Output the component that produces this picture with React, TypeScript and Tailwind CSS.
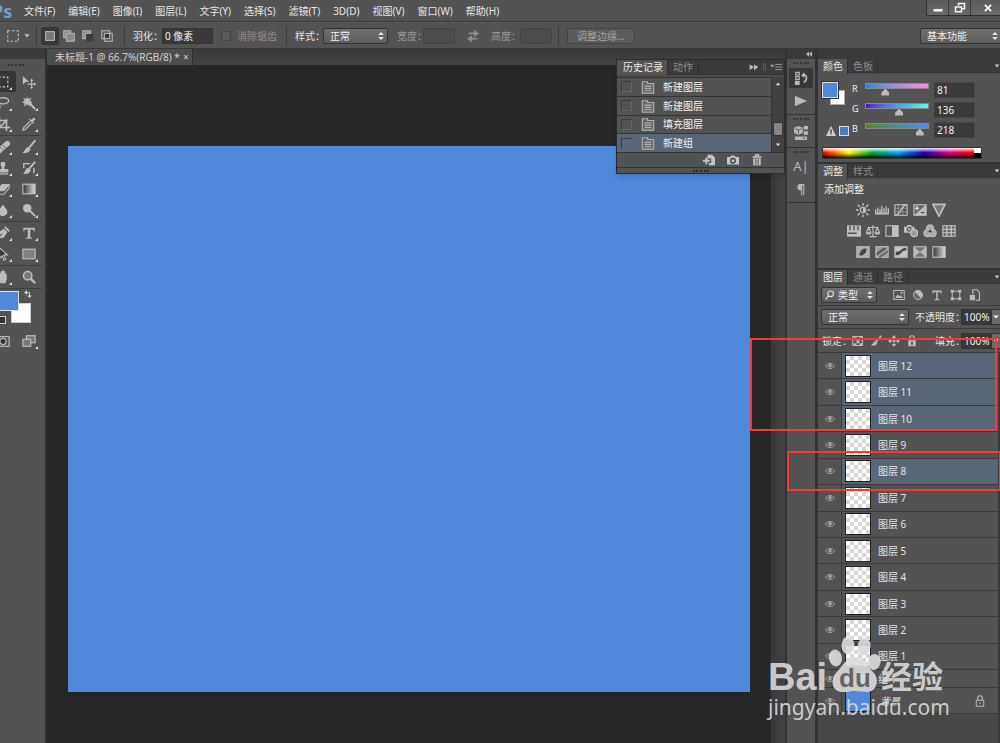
import React from "react";

type IconProps = { children: React.ReactNode; className?: string; box?: string };

function Icon({ children, className = "w-4 h-4", box = "0 0 16 16" }: IconProps) {
  return (
    <svg viewBox={box} className={`shrink-0 ${className}`} fill="none" stroke="currentColor" strokeWidth="1.3" aria-hidden="true">
      {children}
    </svg>
  );
}

const F = { fill: "currentColor", stroke: "none" };

const menus = ["文件(F)", "编辑(E)", "图像(I)", "图层(L)", "文字(Y)", "选择(S)", "滤镜(T)", "3D(D)", "视图(V)", "窗口(W)", "帮助(H)"];

function UpDown() {
  return (
    <svg viewBox="0 0 6 8" className="pointer-events-none absolute right-1 top-1/2 h-2 w-1.5 -translate-y-1/2" fill="#e0e0e0" aria-hidden="true">
      <path d="M0 3L3 0l3 3zM0 5h6L3 8z" />
    </svg>
  );
}

function Select({ label, value, options, className, pad = "pl-1.5" }: { label: string; value: string; options: string[]; className: string; pad?: string }) {
  return (
    <div className={`relative h-4 shrink-0 ${className}`}>
      <select
        aria-label={label}
        defaultValue={value}
        className={`block h-4 w-full appearance-none rounded-xs border border-[#333] bg-linear-to-b from-[#6f6f6f] to-[#5c5c5c] text-[10px] leading-[14px] text-[#f0f0f0] ${pad}`}
      >
        {options.map((o) => (
          <option key={o}>{o}</option>
        ))}
      </select>
      <UpDown />
    </div>
  );
}

function Field({ id, label, value, className, dim = false }: { id: string; label: string; value: string; className: string; dim?: boolean }) {
  return (
    <>
      <label htmlFor={id} className={`whitespace-nowrap ${dim ? "text-[#999]" : "text-[#e4e4e4]"}`}>{label}</label>
      <input
        id={id}
        defaultValue={value}
        disabled={dim}
        className={`h-4 border pl-0.5 text-[10px] ${dim ? "border-[#454545] bg-[#4c4c4c]" : "border-[#333] bg-[#393939] text-[#f0f0f0]"} ${className}`}
      />
    </>
  );
}

function Sep() {
  return <span className="h-5 w-px shrink-0 bg-[#3d3d3d]" />;
}

function TopBars() {
  const modes = [
    <rect key="a" x="3" y="3" width="10" height="10" fill="#777" />,
    <g key="b" fill="#8a8a8a"><rect x="2" y="2" width="8" height="8" /><rect x="5" y="5" width="9" height="9" /></g>,
    <g key="c"><path d="M2 11V2h9v3H5v6z" fill="#888" /><rect x="6" y="6" width="8" height="8" fill="#3c3c3c" stroke="none" /></g>,
    <g key="d"><rect x="2" y="2" width="9" height="9" /><rect x="5" y="5" width="9" height="9" /><rect x="6" y="6" width="4" height="4" fill="#333" stroke="none" /></g>,
  ];
  return (
    <header className="bg-[#535353]">
      <div className="flex h-[22px] items-center border-b border-[#3b3b3b]">
        <span className="-ml-2 w-[30px] text-lg font-bold leading-5 text-[#6f9fd0]">Ps</span>
        <nav className="flex gap-[13px] pl-0.5 text-[#e6e6e6]">
          {menus.map((m) => (
            <button key={m} className="whitespace-nowrap">{m}</button>
          ))}
        </nav>
        <div className="ml-auto flex h-4 self-start rounded-bl-xs border-b border-l border-[#2f2f2f] bg-linear-to-b from-[#5a5a5a] to-[#6a6a6a] text-[#f2f2f2]">
          <button aria-label="最小化" className="flex w-[22px] items-center justify-center border-r border-[#3b3b3b]">
            <Icon className="h-3 w-3"><path d="M2 11h12" strokeWidth="3.5" /></Icon>
          </button>
          <button aria-label="还原" className="flex w-[22px] items-center justify-center border-r border-[#3b3b3b]">
            <Icon className="h-3 w-3"><path d="M6 5V2h8v7h-4M2 6.500h8V13H2z" strokeWidth="2" /></Icon>
          </button>
          <button aria-label="关闭" className="flex w-[29px] items-center justify-center pl-2 pr-1">
            <Icon className="h-2.5 w-2.5"><path d="M3 3l10 10M13 3L3 13" strokeWidth="3" /></Icon>
          </button>
        </div>
      </div>
      <div className="flex h-[27px] items-center border-b border-[#383838] border-t border-t-[#5c5c5c]">
        <div className="flex w-9 items-center gap-2 pl-1.5 text-[#c0c0c0]">
          <Icon className="h-3.5 w-3.5"><rect x="2" y="2" width="12" height="12" strokeDasharray="3 2" /></Icon>
          <Icon className="-ml-1 h-1.5 w-1.5"><path d="M1 3h14L8 12z" {...F} /></Icon>
        </div>
        <Sep />
        <div className="flex items-center gap-px pl-1 text-[#b0b0b0]">
          {modes.map((m, i) => (
            <button key={i} aria-label={["新选区", "添加到选区", "从选区减去", "与选区交叉"][i]} className={`flex h-[18px] w-[18px] items-center justify-center rounded-xs ${i === 0 ? "bg-[#383838]" : ""}`}>
              <Icon className="h-3.5 w-3.5">{m}</Icon>
            </button>
          ))}
        </div>
        <div className="flex items-center gap-1.5 pl-2">
          <Sep />
          <span className="flex items-center gap-1.5 pl-0.5"><Field id="feather" label="羽化：" value="0 像素" className="-ml-[7px] w-[51px]" /></span>
        </div>
        <label className="flex items-center gap-1.5 whitespace-nowrap pl-2 pr-[9px] text-[#8e8e8e]">
          <input type="checkbox" disabled className="h-2.5 w-2.5 appearance-none rounded-xs border border-[#434343] bg-[#5a5a5a]" />
          消除锯齿
        </label>
        <Sep />
        <span className="w-[36px] whitespace-nowrap pl-2 text-[#e4e4e4]">样式：</span>
        <Select label="样式" value="正常" options={["正常", "固定比例", "固定大小"]} className="w-[65px]" />
        <div className="flex items-center pl-[9px]">
          <Field id="w" label="宽度：" value="" dim className="-ml-1 w-8" />
          <Icon className="mx-[11px] h-3.5 w-3.5 text-[#8d8d8d]">
            <path d="M3 5h7M6 11h7" strokeWidth="2" /><path d="M9 1l6 4-6 4zM7 7v8l-6-4z" {...F} />
          </Icon>
          <Field id="h" label="高度：" value="" dim className="-ml-px w-8" />
        </div>
        <span className="pl-1.5"><span className="block h-5 w-px bg-[#3d3d3d]" /></span>
        <button className="ml-2 h-4 w-[68px] rounded-xs border border-[#444] bg-[#5b5b5b] leading-[14px] text-[#a6a6a6]">调整边缘...</button>
        <div className="ml-auto w-20 overflow-hidden">
          <Select label="工作区" value="基本功能" options={["基本功能", "绘画", "摄影"]} className="w-[82px]" />
        </div>
      </div>
    </header>
  );
}

const tools: { name: string; art: React.ReactNode; plain?: boolean }[][] = [
  [
    { name: "选框", art: <rect x="2.500" y="2.500" width="11" height="11" strokeDasharray="3 2" /> },
    { name: "移动", plain: true, art: <><path d="M1 1v10l3-3h4z" {...F} /><path d="M11 6v9M6.500 10.500h9" /><path d="M11 4l2 2.500H9zM11 16l2-2H9zM16 10.500l-2-2v4z" {...F} /></> },
    { name: "套索", art: <><ellipse cx="8" cy="5.500" rx="6.500" ry="3.500" strokeWidth="1.6" /><path d="M3 8c-1 3 3 2 1 6" strokeWidth="1.6" /></> },
    { name: "魔棒", art: <><path d="M7 6l8 9" strokeWidth="2.400" /><path d="M6 0l1 3.500 4-1.500-2 3.500L12 7 9 8.500 9.500 12 6 9.500 2.500 12 3 8.500 0 7l3-1.500L1.500 2 5 3.500z" {...F} /></> },
    { name: "裁剪", art: <path d="M4 0v12h12M0 4h12v12M4 12L13 3" strokeWidth="1.8" /> },
    { name: "吸管", art: <><path d="M9 5L2 12l-1 3 3-1 7-7" strokeWidth="1.4" /><path d="M8 3l5 5 1-1-1.500-1.500L15 3c1-1-1-3-2-2l-2.500 2.500L9 2z" {...F} /></> },
  ],
  [
    { name: "修复", art: <><path d="M3 13L13 4" strokeWidth="6" strokeLinecap="round" /><path d="M5 8l4 4M8 6l4 4" stroke="#555" strokeWidth="1" /></> },
    { name: "画笔", art: <><path d="M15.500 0L8 9" strokeWidth="2.200" /><path d="M7 8l2.500 2c0 4-5 5.500-9 4.500 3-1 3-6 6.500-6.500z" {...F} /></> },
    { name: "图章", art: <path d="M6 1h4l1 3-1.500 3v2H14v4H2V9h4.500V7L5 4zM2 14h12v1.500H2z" {...F} /> },
    { name: "历史画笔", art: <><path d="M15 1L8 9" strokeWidth="2.200" /><path d="M7 8l3 2.500c-1 4-5 5-9 4 3-1 2-6 6-6.500z" {...F} /><path d="M2 8V3h7M13 8c2 2 1 4 0 6" strokeWidth="1.600" /></> },
    { name: "橡皮擦", art: <><path d="M1 10l6-7h8l-6 7z" fill="currentColor" /><path d="M1 10v4h8l6-7V3" /></> },
    { name: "渐变", art: <rect x="1" y="2.500" width="14" height="11" fill="url(#toolGrad)" /> },
    { name: "模糊", art: <path d="M8 1c1 4 5 5 5 9a5 5 0 01-10 0c0-4 4-5 5-9z" {...F} /> },
    { name: "减淡", art: <><circle cx="6" cy="6" r="4.800" {...F} /><path d="M9 9l6 6" strokeWidth="2.400" /></> },
  ],
  [
    { name: "钢笔", art: <><path d="M1 15l2-8 6-4 4 4-4 6z" {...F} /><path d="M1 15l6-6" stroke="#555" /><path d="M10 1l5 5" strokeWidth="2.200" /></> },
    { name: "文字", art: <path d="M1.500 2h13v4h-1L12.500 4H9.500v9l2 .5v1h-7v-1l2-.5V4h-3L2.500 6h-1z" {...F} /> },
    { name: "选择", art: <path d="M4 1v12l3-3 2 5 2-1-2-5h4z" fill="#333" /> },
    { name: "矩形", art: <rect x="1" y="2.500" width="14" height="11" fill="#808080" /> },
  ],
  [
    { name: "抓手", art: <path d="M5 15L1 9c1-1 2 0 3 1V4c0-1 1.500-1 1.500 0v3-5c0-1.300 1.700-1.300 1.700 0v5-6c0-1.300 1.800-1.300 1.800 0v6-5c0-1.200 1.700-1.200 1.700 0v5.500V5c0-1 1.500-1 1.500 0 0 5 .5 6-1.700 10z" {...F} /> },
    { name: "缩放", plain: true, art: <><circle cx="6.500" cy="6.500" r="4.800" fill="#777" strokeWidth="1.800" /><path d="M10 10l5 5" strokeWidth="2.600" /></> },
  ],
];

function ToolBox() {
  return (
    <aside className="flex w-[47px] shrink-0 flex-col overflow-hidden border-r-2 border-[#303030] bg-[#535353]">
      <svg className="absolute h-0 w-0" aria-hidden="true">
        <linearGradient id="toolGrad"><stop offset="0" stopColor="#333" /><stop offset="1" stopColor="#ddd" /></linearGradient>
      </svg>
      <div className="h-2.5 bg-[#3a3a3a]" />
      <div className="flex h-3 items-center pl-2"><span className="h-0.5 w-4 border-t-2 border-dotted border-[#333]" /></div>
      {tools.map((g, i) => (
        <div key={i} className="-ml-2.5 grid w-[52px] grid-cols-2 border-b border-[#3e3e3e] pb-px text-[#bdbdbd]">
          {g.map((t) => (
            <button key={t.name} aria-label={t.name} className={`relative flex h-[21px] w-[26px] items-center justify-center ${t.name === "选框" ? "rounded-xs bg-[#363636]" : ""}`}>
              <Icon className="h-3.5 w-3.5">{t.art}</Icon>
              {!t.plain && (
                <svg viewBox="0 0 3 3" className="absolute bottom-0.5 right-1 h-[3px] w-[3px]" fill="#ddd"><path d="M3 0v3H0z" /></svg>
              )}
            </button>
          ))}
        </div>
      ))}
      <div className="relative mt-px h-9">
        <span className="absolute left-[11px] top-[13px] h-5 w-5 border border-[#ccc] bg-white" />
        <span className="absolute -left-1 top-px h-5 w-[23px] border border-[#ddd] bg-[#5188da]" />
        <Icon className="absolute left-6 top-0 h-2 w-2 text-[#ccc]"><path d="M4 5h7v7" strokeWidth="2" /><path d="M6 0v10L0 5zM6 11h10l-5 5z" {...F} /></Icon>
        <span className="absolute -left-1 bottom-0.5 h-2 w-2.5 border border-[#ccc] bg-[#333]" />
      </div>
      <div className="-ml-2.5 mt-1 grid w-[52px] grid-cols-2 text-[#bdbdbd]">
        <button aria-label="快速蒙版" className="flex h-[21px] w-[26px] items-center justify-center">
          <Icon className="h-3.5 w-3.5"><rect x="1" y="3" width="14" height="11" /><circle cx="8" cy="8.500" r="3.500" fill="#333" /></Icon>
        </button>
        <button aria-label="屏幕模式" className="relative flex h-[21px] w-[26px] items-center justify-center">
          <Icon className="h-3.5 w-3.5"><rect x="5" y="2" width="10" height="8" fill="#777" /><rect x="1" y="6" width="9" height="8" fill="#777" /></Icon>
          <svg viewBox="0 0 3 3" className="absolute bottom-0.5 right-1 h-[3px] w-[3px]" fill="#ddd"><path d="M3 0v3H0z" /></svg>
        </button>
      </div>
    </aside>
  );
}

function Tabs({ items }: { items: string[] }) {
  return (
    <div className="flex h-[15px] items-stretch border-b border-[#4b4b4b] bg-[#3b3b3b] leading-[15px]" role="tablist">
      {items.map((t, i) => (
        <button key={t} role="tab" aria-selected={i === 0} className={`whitespace-nowrap border-r border-[#2e2e2e] pl-[5px] pr-1 ${i === 0 ? "-mb-px bg-[#535353] text-[#e6e6e6]" : "text-[#8c8c8c]"}`}>
          {t}
        </button>
      ))}
      <Icon className="ml-auto h-1.5 w-1.5 self-center text-[#ccc]"><path d="M2 4h12l-6 8z" {...F} /></Icon>
    </div>
  );
}

function DocIcon() {
  return (
    <Icon className="h-3.5 w-3.5 text-[#b0b0b0]"><path d="M1.500 2h6v2h7v11h-13z" fill="#666" /><path d="M4 7h8M4 9.500h8M4 12h8" /></Icon>
  );
}

function HistoryPanel() {
  return (
    <section className="absolute right-0 top-2.5 flex w-[169px] flex-col border border-[#2c2c2c] bg-[#4b4b4b] shadow-md">
      <div className="flex h-[15px] border-b border-[#343434] bg-[#3b3b3b] leading-[15px]">
        <button className="-mb-px border-r border-[#2e2e2e] bg-[#535353] pl-1.5 pr-1 text-[#e6e6e6]">历史记录</button>
        <button className="border-r border-[#2e2e2e] px-[5px] text-[#8c8c8c]">动作</button>
        <div className="ml-auto flex items-center gap-1 pr-0.5 text-[#bbb]">
          <Icon className="h-2.5 w-2.5"><path d="M1 4l7 4-7 5zM8 4l7 4-7 5z" {...F} /></Icon>
          <span className="h-2 w-[3px] border-x border-[#5a5a5a]" />
          <Icon className="h-3 w-3 text-[#999]"><path d="M7 4.500h9M7 8h9M7 11.500h9" /><path d="M0 5h6L3 9z" {...F} /></Icon>
        </div>
      </div>
      <div className="flex pt-0.5">
        <ul className="flex h-[75px] flex-1 flex-col">
          {["新建图层", "新建图层", "填充图层", "新建组"].map((t, i) => (
            <li key={i} className={`flex flex-1 items-center border-t border-[#343434] pl-1 text-[#f0f0f0] ${i === 3 ? "bg-[#596678]" : "bg-[#535353]"}`}>
              <span className="mr-[9px] h-[11px] w-[11px] border border-[#3a3a3a] border-r-[#666] border-b-[#666]" />
              <DocIcon />
              <span className="pl-2">{t}</span>
            </li>
          ))}
        </ul>
        <div className="flex w-[13px] flex-col items-center border-l border-[#333] bg-[#414141] py-1 text-[#ddd]">
          <Icon className="h-1.5 w-1.5"><path d="M2 11h12L8 4z" {...F} /></Icon>
          <span className="mt-auto mb-1.5 h-[14px] w-2.5 rounded-xs border border-[#333] bg-[#858585]" />
          <Icon className="h-1.5 w-1.5"><path d="M2 4h12l-6 7z" {...F} /></Icon>
        </div>
      </div>
      <div className="flex h-4 items-center justify-end gap-3 border-y border-[#363636] bg-[#535353] pr-[21px] text-[#c4c4c4]">
        <Icon className="h-3 w-3"><path d="M6 1h6l4 4v10H8v-3h3V6H6z" {...F} /><path d="M0 9h9M4.500 4.500v9" strokeWidth="2.500" /></Icon>
        <Icon className="h-3 w-3"><path d="M0 4h4l2-2h4l2 2h4v10H0z" {...F} /><circle cx="8" cy="9" r="3" stroke="#444" strokeWidth="1.800" /></Icon>
        <Icon className="h-3 w-3"><path d="M2 4h12M6 3V1h4v2" strokeWidth="1.800" /><path d="M3 6h10v9H3z" {...F} /><path d="M6.500 7v7M9.500 7v7" stroke="#444" /></Icon>
      </div>
      <div className="flex h-[5px] items-center justify-center bg-[#535353]"><span className="w-4 border-t-2 border-dotted border-[#2c2c2c]" /></div>
    </section>
  );
}

function Grip() {
  return <span className="mb-1 mt-[3px] w-4 border-t-2 border-dotted border-[#353535]" />;
}

function Dock() {
  return (
    <aside className="flex w-8 shrink-0 flex-col border-x-2 border-[#333] bg-[#535353] text-[#b8b8b8]">
      <div className="flex h-2.5 items-center justify-end bg-[#3a3a3a] pr-[3px]"><Icon className="h-1.5 w-1.5"><path d="M8 1v14L0 8zM16 1v14L8 8z" {...F} /></Icon></div>
      <div className="flex flex-col items-center border-b border-[#333] pb-[5px]">
        <Grip />
        <button aria-label="历史记录" className="flex h-5 w-6 items-center justify-center rounded-xs bg-[#373737]">
          <Icon className="h-3.5 w-3.5"><path d="M2 1.500h4v3H2zM2 6.500h4v3H2z" /><path d="M1 11h5.500v5H1zM8 5l4-4v7z" {...F} /><path d="M11 4c5 1 4 7 0 9" strokeWidth="1.800" /></Icon>
        </button>
        <button aria-label="动作" className="mt-[5px] flex h-4 items-center"><Icon className="h-3.5 w-3.5"><path d="M1 2l14 6-14 6z" {...F} /></Icon></button>
      </div>
      <div className="flex flex-col items-center border-b border-[#333] pb-[5px]">
        <Grip />
        <button aria-label="属性"><Icon className="h-[18px] w-3.5"><path d="M5 0l5 2v6l-5 2-5-2V2zM11 0h5v4h-5zM11 6h5v4h-5zM1 12h14v4H1z" {...F} /><path d="M1 3l4 1.500L9 3M5 4.500V9M10 14h3" stroke="#555" strokeWidth="1" /></Icon></button>
      </div>
      <div className="flex flex-col items-center border-b border-[#333] pb-1">
        <Grip />
        <button aria-label="字符" className="h-[18px] text-[13px] leading-[18px]">A|</button>
        <button aria-label="段落" className="mt-[5px] h-[18px] text-[13px] font-bold leading-[18px]">¶</button>
      </div>
    </aside>
  );
}

const channels = [
  { name: "R", value: 81, bar: "from-[#0088da] to-[#ff88da]" },
  { name: "G", value: 136, bar: "from-[#5100da] to-[#51ffda]" },
  { name: "B", value: 218, bar: "from-[#518800] to-[#5188ff]" },
];

function ColorPanel() {
  return (
    <section className="h-[105px] border-b-2 border-[#333]">
      <Tabs items={["颜色", "色板"]} />
      <div className="flex h-[72px] pl-1 pt-2">
        <div className="w-[30px]">
          <div className="relative h-12">
            <span className="absolute left-2 top-2 h-[15px] w-[15px] border border-[#aaa] bg-white" />
            <span className="absolute left-0 top-0 h-4 w-4 border border-[#ddd] bg-[#5188da] outline outline-[#333]" />
            <span className="absolute -bottom-1.5 left-[17px] h-2.5 w-2.5 border border-[#ddd] bg-[#4a7cc4]" />
            <Icon className="absolute -bottom-1.5 left-1 h-2.5 w-2.5 text-[#d0d0d0]"><path d="M8 0l8 16H0z" {...F} /><path d="M8 5v6M8 12v2" stroke="#333" strokeWidth="2" /></Icon>
          </div>
        </div>
        <div className="flex flex-col">
          {channels.map((c) => (
            <div key={c.name} className="flex h-5 items-start text-[#f0f0f0]">
              <label htmlFor={c.name} className="w-[13px] text-[9px] leading-[13px]">{c.name}</label>
              <div className="w-16 pt-px">
                <div className={`h-[6px] border border-[#888] bg-linear-to-r ${c.bar}`} />
                <input
                  id={c.name}
                  type="range"
                  min="0"
                  max="255"
                  defaultValue={c.value}
                  className="-mx-1 block h-[6px] w-[72px] appearance-none bg-transparent [&::-webkit-slider-thumb]:h-[7px] [&::-webkit-slider-thumb]:w-2 [&::-webkit-slider-thumb]:appearance-none [&::-webkit-slider-thumb]:bg-[#bbb] [&::-webkit-slider-thumb]:[clip-path:polygon(50%_0,100%_60%,100%_100%,0_100%,0_60%)]"
                />
              </div>
              <input aria-label={`${c.name} 值`} defaultValue={c.value} className="ml-[5px] h-4 w-[41px] border border-[#444] bg-[#3a3a3a] pl-0.5 text-[10px]" />
            </div>
          ))}
        </div>
      </div>
      <div className="ml-1 mt-px flex h-3 w-[160px] border border-[#333]">
        <div className="flex-1 bg-[linear-gradient(to_bottom,rgba(255,255,255,.95),rgba(255,255,255,0)_45%,rgba(0,0,0,0)_50%,rgba(0,0,0,.9)),linear-gradient(to_right,#f00,#ff0_17%,#0a4_33%,#0af_50%,#20b_67%,#e08_84%,#f00)]" />
        <div className="w-[7px] bg-linear-to-b from-white from-50% to-black to-50%" />
      </div>
    </section>
  );
}

const adjustments: { name: string; art: React.ReactNode }[][] = [
  [
    { name: "亮度", art: <><circle cx="8" cy="8" r="3" /><path d="M8 5a3 3 0 010 6z" {...F} /><path d="M8 0v3M8 13v3M0 8h3M13 8h3M2 2l2.500 2.500M11.500 11.500L14 14M14 2l-2.500 2.500M4.500 11.500L2 14" strokeWidth="1.600" /></> },
    { name: "色阶", art: <path d="M0 11h16v2H0zM0 7h1.500v4H0zM2.500 5H4v6H2.500zM5 7h1.500v4H5zM7 3h1.500v8H7zM9.500 6H11v5H9.500zM12 4h1.500v7H12zM14.500 6H16v5h-1.500z" {...F} /> },
    { name: "曲线", art: <><rect x="1" y="2" width="14" height="12" /><path d="M1 6h14M1 10h14M5 2v12M10 2v12" strokeWidth=".6" /><path d="M1 14c8 0 6-12 14-12" strokeWidth="1.800" /></> },
    { name: "曝光度", art: <><rect x="1" y="2" width="14" height="12" fill="#666" /><path d="M15 2v12H1z" {...F} /><path d="M2 6h5M4.500 3.500v5" stroke="#eee" /><path d="M9 11h4" stroke="#444" /></> },
    { name: "自然饱和度", art: <path d="M1 1.500h14L8 15z" fill="#777" strokeWidth="2" /> },
  ],
  [
    { name: "色相", art: <><path d="M0 1.500h16v13H0z" {...F} /><path d="M3.500 2v5M8 2v5M12.500 2v5M1 10.500h10" stroke="#555" strokeWidth="1.600" /></> },
    { name: "色彩平衡", art: <><path d="M8 1v13M2 4h12M4 14.500h8" /><path d="M3 4l-2.500 6h5zM13 4l-2.500 6h5z" /><path d="M0 10h6l-1 2H1zM10 10h6l-1 2h-4z" {...F} /></> },
    { name: "黑白", art: <><rect x="1" y="2" width="14" height="12" fill="#555" /><path d="M8 2h7v12H8z" {...F} /></> },
    { name: "照片滤镜", art: <><path d="M0 3h3l1-2h4l1 2h3v7H0z" {...F} /><circle cx="6" cy="6" r="2.200" stroke="#555" /><circle cx="11.500" cy="10.500" r="4" fill="#999" stroke="#ccc" /></> },
    { name: "通道混合器", art: <><circle cx="8" cy="5" r="4" fill="#aaa" /><circle cx="5" cy="10.500" r="4" fill="#aaa" /><circle cx="11" cy="10.500" r="4" fill="#aaa" /><path d="M8 6l2.500 3.500h-5z" fill="#444" stroke="none" /></> },
    { name: "颜色查找", art: <><rect x="1" y="2" width="14" height="12" fill="#666" /><path d="M1 6h14M1 10h14M5.500 2v12M10.500 2v12" stroke="#ccc" /></> },
  ],
  [
    { name: "反相", art: <><rect x="1" y="2" width="14" height="12" fill="#aaa" /><path d="M4 12c0-6 4-8 8-8 0 6-4 8-8 8z" fill="#444" stroke="none" /></> },
    { name: "色调分离", art: <><rect x="1" y="2" width="14" height="12" fill="#999" /><path d="M2 9l8-6h4L2 12z" fill="#555" stroke="none" /><path d="M5 14l10-7" stroke="#666" strokeWidth="2" /></> },
    { name: "阈值", art: <><rect x="1" y="2" width="14" height="12" fill="#c4c4c4" /><path d="M2 8l4-1 4-3 4-1v3l-4 1-4 4-4 1z" fill="#444" stroke="none" /></> },
    { name: "可选颜色", art: <><rect x="1" y="2" width="14" height="12" fill="#777" /><path d="M1 2l7 6-7 6zM15 2L8 8l7 6z" fill="#bbb" stroke="none" /></> },
    { name: "渐变映射", art: <rect x="1" y="2" width="14" height="12" fill="url(#toolGrad)" /> },
  ],
];

function AdjustPanel() {
  return (
    <section className="h-[106px] border-b-2 border-[#333]">
      <Tabs items={["调整", "样式"]} />
      <p className="pl-1.5 pt-1 leading-3 text-[#f0f0f0]">添加调整</p>
      <div className="flex flex-col gap-[7px] pr-4 pt-2 text-[#bebebe]">
        {adjustments.map((row, i) => (
          <div key={i} className="flex justify-center gap-[5px]">
            {row.map((a) => (
              <button key={a.name} aria-label={a.name}><Icon className="h-[14px] w-[14px]">{a.art}</Icon></button>
            ))}
          </div>
        ))}
      </div>
    </section>
  );
}

const lockArt = <><path d="M3 7h10v8H3z" /><path d="M5 7V4a3 3 0 016 0v3M8 10v2" strokeWidth="1.600" /></>;

function Percent({ id, label }: { id: string; label: string }) {
  return (
    <div className="ml-auto flex items-center">
      <Field id={id} label={label} value="100%" className="-ml-1 w-[30px]" />
      <button aria-label={`${label}选项`} className="flex h-4 w-[9px] items-center justify-center border-y border-l border-[#333] bg-[#6a6a6a] text-white">
        <Icon className="h-1.5 w-1.5"><path d="M1 4h14l-7 8z" {...F} /></Icon>
      </button>
    </div>
  );
}

function Eye() {
  return (
    <div className="flex w-6 shrink-0 items-center justify-center self-stretch border-r border-[#3e3e3e] text-[#a0a0a0]">
      <Icon className="h-2.5 w-2.5"><path d="M1 8c3-5.500 11-5.500 14 0-3 5.500-11 5.500-14 0z" strokeWidth="1.600" /><circle cx="8" cy="7.500" r="3" {...F} /></Icon>
    </div>
  );
}

const layerNumbers = [12, 11, 10, 9, 8, 7, 6, 5, 4, 3, 2, 1];
const selected = [12, 11, 10, 8];

function LayersPanel() {
  return (
    <section className="flex flex-1 flex-col">
      <Tabs items={["图层", "通道", "路径"]} />
      <div className="flex h-[21px] items-center border-b border-[#3a3a3a] pl-[3px]">
        <div className="relative flex items-center">
          <Select label="筛选类型" value="类型" options={["类型", "名称", "效果"]} className="w-14" pad="pl-4" />
          <Icon className="pointer-events-none absolute left-1 h-2.5 w-2.5 text-[#ddd]"><circle cx="9" cy="6" r="4.500" strokeWidth="1.800" /><path d="M6 9l-5 6" strokeWidth="2" /></Icon>
        </div>
        <div className="flex gap-[7px] pl-4 text-[#bbb]">
          <Icon className="h-3 w-3"><rect x="1" y="2" width="14" height="12" /><path d="M3 12l3-5 3 3 2-2 2 4zM10 4h3v2h-3z" {...F} /></Icon>
          <Icon className="h-3 w-3"><circle cx="8" cy="8" r="6" fill="#666" /><path d="M3.500 3.500A6 6 0 0112.500 12.500z" {...F} /></Icon>
          <Icon className="h-3 w-3"><path d="M2 2h12v4h-1.500L12 4H9v9l2 .5V15H5v-1.500L7 13V4H4l-.5 2H2z" {...F} /></Icon>
          <Icon className="h-3 w-3"><rect x="3" y="3" width="10" height="10" /><path d="M1 1h4v4H1zM11 1h4v4h-4zM1 11h4v4H1zM11 11h4v4h-4z" {...F} /></Icon>
          <Icon className="h-3 w-3"><path d="M5 7V1h6l3 4v10H9" strokeWidth="1.600" /><path d="M1 8h7v7H1z" {...F} /></Icon>
        </div>
      </div>
      <div className="flex h-[23px] items-center border-b border-[#3a3a3a] pl-[3px]">
        <Select label="混合模式" value="正常" options={["正常", "溶解", "变暗"]} className="w-[88px]" />
        <Percent id="opacity" label="不透明度：" />
      </div>
      <div className="flex h-[23px] items-center pl-1">
        <span className="w-[30px] whitespace-nowrap text-[#e4e4e4]">锁定：</span>
        <div className="flex gap-1.5 text-[#bbb]">
          <Icon className="h-3 w-3"><rect x="1" y="2" width="13" height="12" /><path d="M2 3h4v4H2zM10 3h4v4h-4zM6 7h4v4H6zM2 11h4v3H2zM10 11h4v3h-4z" {...F} /></Icon>
          <Icon className="h-3 w-3"><path d="M15 1L8 9" strokeWidth="2" /><path d="M7 8l3 2c-1 4-5 5-9 4 3-1 3-5 6-6z" {...F} /></Icon>
          <Icon className="h-3 w-3"><path d="M8 3v10M3 8h10" /><path d="M8 0l3 4H5zM8 16l3-4H5zM0 8l4-3v6zM16 8l-4-3v6z" {...F} /></Icon>
          <Icon className="h-3 w-3"><path d="M3 7h10v8H3z" {...F} /><path d="M5 7V4a3 3 0 016 0v3" strokeWidth="1.600" /><path d="M8 9v4" stroke="#444" strokeWidth="2" /></Icon>
        </div>
        <Percent id="fill" label="填充：" />
      </div>
      <div className="flex flex-1 flex-col border-r-2 border-[#3a3a3a] bg-[#474747] text-[#e2e2e2]">
        <ul className="flex h-[317px] flex-col bg-[#535353]">
          {layerNumbers.map((n) => (
            <li key={n} className="flex flex-1 items-center border-t border-[#3a3a3a]">
              <Eye />
              <div className={`flex h-full flex-1 items-center pl-[3px] ${selected.includes(n) ? "bg-[#596678]" : ""}`}>
                <span className="h-[22px] w-[26px] border border-[#222] bg-white bg-[repeating-conic-gradient(#d6d6d6_0_25%,#fff_0_50%)] bg-size-[8px_8px]" />
                <span className="pl-[7px]">图层 {n}</span>
              </div>
            </li>
          ))}
        </ul>
        <div className="flex h-[18px] items-center border-t border-[#3a3a3a] bg-[#535353]">
          <Eye />
          <Icon className="ml-1 h-2 w-2"><path d="M2 0l12 8-12 8z" {...F} /></Icon>
          <Icon className="ml-1 h-3.5 w-3.5 text-[#aaa]"><path d="M1 2h5l1 2h8v10H1z" {...F} /></Icon>
          <span className="pl-1.5">组 1</span>
        </div>
        <div className="flex h-[27px] items-center border-y border-[#3a3a3a] bg-[#535353]">
          <Eye />
          <span className="ml-[3px] h-[22px] w-[26px] border border-[#222] bg-[#5188da]" />
          <span className="pl-[9px] italic">背景</span>
          <Icon className="ml-auto mr-3 h-3 w-3 text-[#bbb]">{lockArt}</Icon>
        </div>
      </div>
    </section>
  );
}

function Watermark() {
  return (
    <div className="pointer-events-none absolute right-[53px] top-[636px] flex w-[179px] flex-col text-[#dcdcdc]/90">
      <div className="flex h-14 items-end">
        <span className="w-[54px] font-['Liberation_Sans'] text-[38px] font-bold leading-[30px]">Bai</span>
        <div className="relative h-14 w-[59px]">
          <svg viewBox="0 0 59 56" className="h-14 w-[59px]" fill="currentColor" aria-hidden="true">
            <ellipse cx="13.500" cy="22" rx="6.500" ry="8.500" transform="rotate(-10 13.500 22)" />
            <ellipse cx="26" cy="9.500" rx="6.500" ry="9" />
            <ellipse cx="42" cy="10.500" rx="6.500" ry="9" transform="rotate(8 42 10.500)" />
            <ellipse cx="52" cy="26" rx="6.500" ry="8" transform="rotate(15 52 26)" />
            <path d="M33 21c9 0 12 9 18 15 7 7 4 19-5 20-5 0-8-1-13-1s-9 2-14 1c-9-1-11-12-5-19 7-7 10-16 19-16z" />
          </svg>
          <span className="absolute bottom-0.5 left-[17px] font-['Liberation_Sans'] text-[26px] font-bold leading-6 text-[#666]">du</span>
        </div>
        <span className="whitespace-nowrap text-[31px] font-bold leading-[32px]">经验</span>
      </div>
      <span className="text-[21px] leading-[30px]">jingyan.baidu.com</span>
    </div>
  );
}

export default function App() {
  return (
    <div className="relative flex min-h-screen flex-col overflow-hidden bg-[#535353] font-['Noto_Sans','Noto_Sans_CJK_SC',sans-serif] text-[10px] leading-4">
      <TopBars />
      <div className="flex flex-1">
        <ToolBox />
        <main className="relative flex min-w-0 flex-1 flex-col">
          <div className="flex h-4 bg-linear-to-b from-[#383838] to-[#434343]">
            <div className="flex items-center gap-0.5 whitespace-nowrap border-r border-[#2e2e2e] bg-[#4d4d4d] pl-2 pr-0.5 leading-[18px] text-[#d0d0d0]">
              未标题-1 @ 66.7%(RGB/8) *
              <button aria-label="关闭文档" className="w-2">×</button>
            </div>
          </div>
          <div className="flex flex-1">
            <div className="flex flex-1 bg-[#272727] pb-[51px] pl-[21px] pr-[21px] pt-[81px]">
              <div className="flex-1 bg-[#5188da] shadow-md" />
            </div>
            <div className="w-3.5 bg-linear-to-r from-[#393939] to-[#434343]" />
          </div>
          <HistoryPanel />
        </main>
        <Dock />
        <div className="flex w-[183px] shrink-0 flex-col border-l border-[#333]">
          <div className="h-2.5 bg-[#3a3a3a]" />
          <ColorPanel />
          <AdjustPanel />
          <LayersPanel />
        </div>
      </div>
      <div className="pointer-events-none absolute right-[3px] top-[338px] h-[93px] w-[247px] border-2 border-[#fb3636]" />
      <div className="pointer-events-none absolute -right-px top-[451px] h-[40px] w-[214px] border-2 border-[#fb3636]" />
      <Watermark />
    </div>
  );
}
